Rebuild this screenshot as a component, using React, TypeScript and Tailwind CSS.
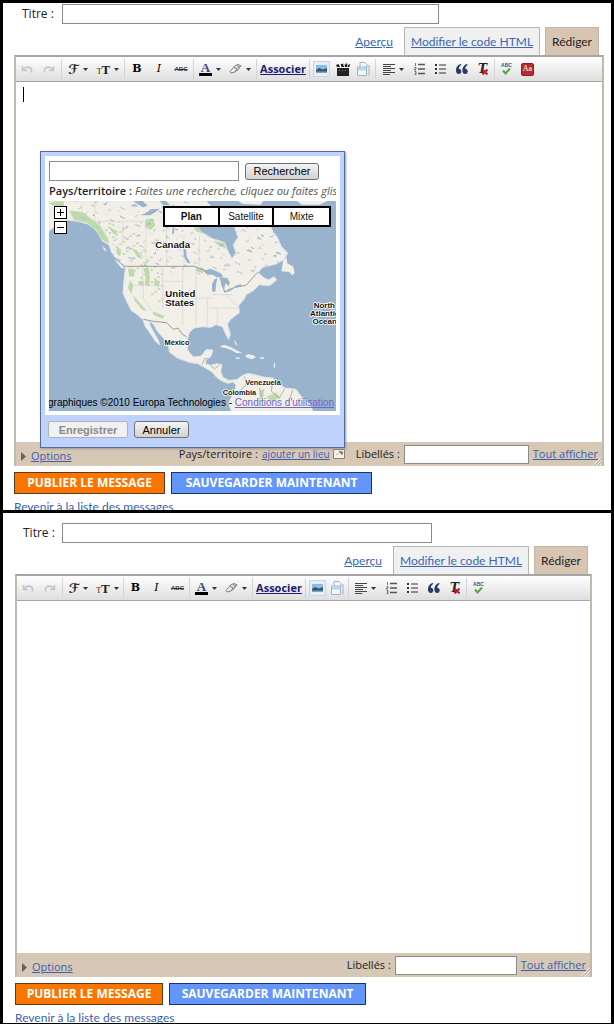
import type { ReactNode } from 'react';
import { clsx } from 'clsx';

const LAND =
  'M9 9 L9 98 L30 84 L65 66 L95 70 L125 78 L146 92 L160 112 L168 128 L190 142 L196 162 L208 178 L226 194 L240 205 L236 226 L233 256 L231 286 L244 314 L256 338 L274 350 L290 364 L298 386 L310 402 L318 414 L330 432 L342 441 L336 424 L324 404 L313 384 L308 368 L322 378 L334 400 L352 420 L368 443 L370 462 L394 480 L430 493 L455 497 L472 506 L497 521 L512 538 L526 548 L546 556 L560 552 L570 560 L568 580 L554 602 L548 616 L556 639 L800 639 L790 614 L766 596 L750 574 L716 570 L690 550 L680 540 L656 538 L626 530 L606 526 L590 532 L572 545 L548 547 L530 538 L524 520 L528 500 L512 497 L494 502 L478 498 L480 486 L494 476 L501 456 L480 455 L466 474 L442 477 L426 458 L422 432 L430 404 L444 390 L470 386 L494 388 L510 380 L530 386 L538 406 L548 424 L553 408 L544 378 L554 364 L580 344 L578 322 L594 304 L600 290 L622 278 L640 260 L654 262 L672 262 L692 246 L684 236 L668 246 L652 238 L636 224 L650 208 L690 198 L716 184 L725 165 L706 146 L694 118 L680 100 L668 74 L640 50 L600 40 L574 60 L566 88 L576 118 L562 140 L570 164 L558 182 L544 156 L536 134 L500 122 L468 104 L452 84 L456 50 L500 30 L480 9 Z';

const GREENS = [
  'M70 38 L110 42 L140 66 L160 80 L186 120 L190 138 L166 124 L150 94 L122 74 L84 66 Z',
  'M9 16 L28 10 L52 10 L54 24 L30 28 Z',
  'M300 62 L322 64 L328 82 L314 96 L296 86 Z',
  'M440 70 L462 90 L466 106 L450 100 Z',
  'M196 92 L214 98 L210 112 L198 104 Z',
  'M256 150 L274 158 L290 184 L276 178 Z',
  'M212 146 L226 156 L222 176 L212 166 Z',
  'M246 212 L262 214 L266 234 L250 236 Z',
  'M292 212 L306 206 L312 238 L308 266 L296 258 L300 236 Z',
  'M326 246 L342 250 L338 268 L324 262 Z',
  'M252 246 L262 262 L256 288 L246 270 Z',
  'M262 292 L284 318 L302 338 L290 336 L266 308 Z',
  'M320 340 L356 354 L350 362 L322 350 Z',
  'M448 208 L476 214 L470 226 L452 220 Z',
  'M500 128 L536 136 L540 152 L518 142 Z',
  'M276 250 L292 248 L294 262 L280 262 Z',
  'M640 578 L656 572 L650 602 L640 596 Z',
  'M660 596 L690 584 L704 600 L676 608 Z',
];

const LAKES = [
  'M282 52 L302 44 L314 34 L342 32 L326 44 L312 52 Z',
  'M262 10 L290 9 L304 24 L290 28 Z',
  'M340 9 L360 9 L372 22 L352 22 Z',
  'M412 150 L420 156 L422 176 L434 194 L424 194 L414 176 Z',
  'M380 88 L386 90 L382 112 L378 104 Z',
  'M472 220 L492 212 L508 218 L524 226 L532 236 L512 238 L500 230 L484 230 Z',
  'M506 244 L514 240 L510 262 L508 282 L498 280 L498 258 Z',
  'M524 238 L544 240 L552 254 L548 264 L538 256 L534 276 L526 262 Z',
  'M534 284 L548 272 L566 270 L552 280 Z',
  'M566 264 L584 258 L586 264 L570 270 Z',
];

const ISLANDS = [
  'M712 186 L722 180 L724 196 L742 206 L746 226 L738 232 L730 222 L706 220 Z',
  'M520 446 L534 440 L552 446 L570 456 L588 464 L572 466 L556 456 L538 450 Z',
  'M598 474 L606 468 L622 472 L630 478 L616 484 L600 478 Z',
  'M570 478 L582 479 L580 483 L570 482 Z',
  'M642 478 L654 478 L654 482 L644 483 Z',
  'M168 142 L178 152 L182 162 L174 156 Z',
  'M204 184 L222 196 L238 212 L226 210 Z',
  'M576 9 L652 9 L644 20 L590 18 Z',
  'M752 9 L844 9 L820 20 L768 20 Z',
  'M564 426 L570 432 L574 444 L568 438 Z',
  'M684 492 L688 500 L686 512 L683 504 Z',
];

// small lakes and rivers scattered over the northern land
const SPECKS = Array.from({ length: 520 }, (_, i) => ({
  x: 90 + ((i * 137) % 641),
  y: 12 + ((i * 89 + Math.floor(i / 7) * 13) % 217),
  dx: ((i * 7) % 13) - 4,
  dy: ((i * 5) % 11) - 6,
}));

const GREEN_SPECKS = Array.from({ length: 60 }, (_, i) => ({
  x: 160 + ((i * 53) % 191),
  y: 76 + ((i * 71) % 263),
}));

const MAP_LABELS = [
  { text: 'Canada', x: 380, y: 151, size: 29 },
  { text: 'United', x: 403, y: 296, size: 29 },
  { text: 'States', x: 401, y: 323, size: 29 },
  { text: 'México', x: 393, y: 442, size: 22 },
  { text: 'Venezuela', x: 651, y: 561, size: 22 },
  { text: 'Colombia', x: 580, y: 591, size: 22 },
  { text: 'North', x: 835, y: 330, size: 24 },
  { text: 'Atlantic', x: 836, y: 354, size: 24 },
  { text: 'Ocean', x: 836, y: 378, size: 24 },
];

const MapDrawing = () => (
  <svg viewBox="9 9 861 630" preserveAspectRatio="xMidYMid slice" className="block h-[210px] w-full bg-[#99b3cc]">
    <defs>
      <clipPath id="land">
        <path d={LAND} />
      </clipPath>
    </defs>
    <path d={LAND} fill="#f2efe9" stroke="#dfe6ea" strokeWidth="3" strokeLinejoin="round" />
    <g clipPath="url(#land)">
      {GREENS.map((d) => (
        <path key={d} d={d} fill="#b5d6a0" opacity="0.85" />
      ))}
      {GREEN_SPECKS.map((s, i) => (
        <ellipse key={i} cx={s.x} cy={s.y} rx="5" ry="3" fill="#b9d9a4" opacity="0.8" />
      ))}
      {SPECKS.map((s, i) => (
        <path key={i} d={`M${s.x} ${s.y} l${s.dx} ${s.dy}`} stroke={i % 3 ? '#b4c4d2' : '#93abc2'} strokeWidth="3" />
      ))}
      <g fill="none" stroke="#d6d2cc" strokeWidth="2">
        <path d="M146 9 V70 H300 M230 70 V140 M300 70 V204 M362 80 V204 M414 110 V204 M460 110 V204" />
        <path d="M290 206 V262 H350 M350 206 V330 M262 262 H292 V300 L318 340 M350 250 H410 M350 290 H420 M410 206 V380 M450 206 V300 H500 M450 300 V380 M484 300 V384 M500 290 H560 M490 330 H580 M514 330 V380 M540 290 L570 320" />
      </g>
      <path
        d="M236 205 H446 L474 216 L520 232 L536 282 L566 268 L600 262 L632 226 L640 222 M292 364 L322 370 L362 374 L382 394 L396 390 L410 410 L422 416"
        fill="none"
        stroke="#9c9a98"
        strokeWidth="3"
      />
      <path d="M468 500 L476 482 L490 482 M494 504 L506 512 L520 502 M572 590 L600 560 L596 536 M640 570 L650 604 M680 548 L676 580 L700 600 L716 572 M740 576 L732 600" fill="none" stroke="#b9b2a4" strokeWidth="3" />
    </g>
    {LAKES.map((d) => (
      <path key={d} d={d} fill="#99b3cc" />
    ))}
    {ISLANDS.map((d) => (
      <path key={d} d={d} fill="#f2efe9" />
    ))}
    {MAP_LABELS.map((l) => (
      <text
        key={l.text}
        x={l.x}
        y={l.y}
        fontSize={l.size}
        textAnchor="middle"
        fill="#111"
        stroke="#fff"
        strokeWidth="5"
        strokeLinejoin="round"
        paintOrder="stroke"
        className="font-bold"
      >
        {l.text}
      </text>
    ))}
  </svg>
);

const Arrow = () => (
  <svg viewBox="0 0 5 3" className="h-[3px] w-[5px] shrink-0">
    <path d="M0 0h5L2.5 3z" fill="#2b3350" />
  </svg>
);

const Separator = () => <span className="mx-px h-5 w-px shrink-0 bg-[#d4d4d4]" />;

const Tool = ({ label, className, children }: { label: string; className: string; children: ReactNode }) => (
  <button type="button" aria-label={label} className={clsx('flex h-5 shrink-0 items-center justify-center', className)}>
    {children}
  </button>
);

const Toolbar = ({ compact = false }: { compact?: boolean }) => {
  const menu = clsx('gap-1', compact ? 'w-[29px]' : 'w-[30px]');
  const style = compact ? 'w-[21px]' : 'w-[22px]';
  const insert = compact ? 'w-5' : 'w-[21px]';

  return (
    <div className="flex h-[25px] items-center overflow-hidden border-b border-[#a5a5a5] bg-linear-to-b from-white to-[#dedede]">
      <Tool label="Annuler la frappe" className="w-[22px]">
        <svg viewBox="0 0 12 10" className="h-[10px] w-3" fill="none" stroke="#c0c5d0" strokeWidth="1.6">
          <path d="M1.5 2v4.5H6M2 6C4 2.5 9 2 10.5 5.500c.4 1.300 0 2.200-.7 3" />
        </svg>
      </Tool>
      <Tool label="Rétablir" className="w-[22px]">
        <svg viewBox="0 0 12 10" className="h-[10px] w-3" fill="none" stroke="#c0c5d0" strokeWidth="1.6">
          <path d="M10.500 2v4.500H6M10 6C8 2.500 3 2 1.500 5.500c-.4 1.300 0 2.200.7 3" />
        </svg>
      </Tool>
      <Separator />
      <Tool label="Police" className={menu}>
        <span className="font-['DejaVu_Sans',sans-serif] text-[13px] leading-none font-bold text-[#222]">ℱ</span>
        <Arrow />
      </Tool>
      <Tool label="Taille" className={menu}>
        <span className="flex items-baseline font-['Liberation_Serif',serif] leading-none text-[#222]">
          <span className="text-[8px]">T</span>
          <span className="text-[13px] font-bold">T</span>
        </span>
        <Arrow />
      </Tool>
      <Separator />
      <Tool label="Gras" className={style}>
        <span className="font-['DejaVu_Serif',serif] text-[11px] font-bold text-black">B</span>
      </Tool>
      <Tool label="Italique" className={style}>
        <span className="font-['DejaVu_Serif',serif] text-[11px] text-black italic">I</span>
      </Tool>
      <Tool label="Barré" className={style}>
        <span className="font-['Liberation_Sans',sans-serif] text-[6px] font-bold text-[#333] line-through">ABC</span>
      </Tool>
      <Separator />
      <Tool label="Couleur du texte" className="w-[30px] gap-1">
        <span className="flex h-[14px] w-[13px] justify-center border-b-[3px] border-black font-['Liberation_Serif',serif] text-[13px] leading-[11px] font-bold text-[#3b4a78]">
          A
        </span>
        <Arrow />
      </Tool>
      <Tool label="Surlignage" className="w-[30px] gap-1">
        <svg viewBox="0 0 13 12" className="h-3 w-[13px]" fill="#eef0f2" stroke="#7a7d84" strokeWidth="1">
          <path d="M5 3.500L8.500 1.500l3 1L9 7l-3 1.500z" />
          <path d="M1 8.500l3.500-4 3.500 1L6 9l-4 1z" />
          <path d="M8.500 1.500L9.500 5M11.500 2.500L12 4" fill="none" />
        </svg>
        <Arrow />
      </Tool>
      <Separator />
      <button type="button" className="w-[50px] shrink-0 text-[11px] font-bold text-[#1c1c72] underline">
        Associer
      </button>
      <Separator />
      <Tool label="Image" className={insert}>
        <svg viewBox="0 0 17 16" className="h-4 w-[17px]">
          <path d="M.5.5h16v15H.5z" fill="#e6eff8" stroke="#c3d6e8" />
          <path d="M3 4h11v8H3z" fill="#8bbde4" />
          <path d="M3 9l3-2 4 1.500L14 7v5H3z" fill="#33566f" />
          <path d="M3 10.500h11V12H3z" fill="#7fa6bd" />
        </svg>
      </Tool>
      {!compact && (
        <Tool label="Vidéo" className={insert}>
          <svg viewBox="0 0 14 13" className="h-[13px] w-[14px]" fill="#222">
            <path d="M1 5h12v8H1zM0 2l2.500-1L4 4H1zM4.500 1.500L7 .5 8 4H5.500zM8.500 2L11 0l.5 4H9zM12 2l2-1-.5 3H12z" />
            <path d="M3 7h1v1H3zM6 7h1v1H6zM9 7h1v1H9z" fill="#888" />
          </svg>
        </Tool>
      )}
      <Tool label="Saut de page" className={insert}>
        <svg viewBox="0 0 13 14" className="h-[14px] w-[13px]" fill="#f2f7fb" stroke="#9ab4c9">
          <path d="M3 5.500V.5h5l2 2v3M.5 5h9v8.500h-9zM12 3v10.500" />
          <path d="M1 5.500h8v3H1z" fill="#b9d5ea" stroke="none" />
        </svg>
      </Tool>
      <Separator />
      <Tool label="Alignement" className={clsx('gap-1', compact ? 'w-[31px]' : 'w-8')}>
        <svg viewBox="0 0 12 11" className="h-[11px] w-3" stroke="#444" strokeWidth="1">
          <path d="M0 .5h12M0 2.500h8M0 4.500h12M0 6.500h8M0 8.500h12M0 10.500h7" />
        </svg>
        <Arrow />
      </Tool>
      <Tool label="Liste numérotée" className="w-[21px]">
        <svg viewBox="0 0 11 12" className="h-3 w-[11px]" stroke="#555" fill="none">
          <path d="M4 1.500h7M4 6h7M4 10.500h7" strokeWidth="1.300" />
          <path d="M1.500 0v3M.5 4.500h1.500v1.500H.5v1H2M.5 8.500H2v3H.5M1 10h1" strokeWidth=".8" />
        </svg>
      </Tool>
      <Tool label="Liste à puces" className="w-[21px]">
        <svg viewBox="0 0 11 12" className="h-3 w-[11px]" fill="#333">
          <path d="M0 1h2v2H0zM0 5h2v2H0zM0 9h2v2H0zM4 1.500h7v1H4zM4 5.500h7v1H4zM4 9.500h7v1H4z" />
        </svg>
      </Tool>
      <Tool label="Citation" className="w-[21px]">
        <svg viewBox="0 0 12 10" className="h-[10px] w-3" fill="#2c3a63">
          <path d="M5 0C2 .5 0 3 0 6.500 0 8.500 1 10 2.700 10S5.300 8.800 5.300 7.200 4.200 4.800 2.800 4.700C3 3 3.800 1.800 5.200 1zM11.300 0C8.500.5 6.400 3 6.400 6.500c0 2 1 3.500 2.700 3.500s2.600-1.200 2.600-2.800-1.100-2.400-2.500-2.500c.2-1.700 1-2.900 2.400-3.700z" />
        </svg>
      </Tool>
      <Tool label="Supprimer la mise en forme" className="w-[21px]">
        <span className="relative font-['DejaVu_Serif',serif] text-[12px] leading-none font-bold text-[#222] italic">
          T
          <svg viewBox="0 0 6 6" className="absolute -right-px bottom-0 size-[6px]" stroke="#c2182b" strokeWidth="2">
            <path d="M.5.5l5 5M5.500.5l-5 5" />
          </svg>
        </span>
      </Tool>
      <Separator />
      <Tool label="Orthographe" className="w-[21px] flex-col">
        <span className="font-['Liberation_Sans',sans-serif] text-[5px] leading-[5px] font-bold text-[#3d4f7d]">ABC</span>
        <svg viewBox="0 0 9 7" className="h-[7px] w-[9px]" fill="none" stroke="#55a53f" strokeWidth="2">
          <path d="M1 2.500L3.500 5.500 8 .5" />
        </svg>
      </Tool>
      {!compact && (
        <Tool label="Dictionnaire" className="w-[21px]">
          <span className="flex h-[13px] w-[13px] items-center justify-center rounded-[2px] border border-[#8a2323] bg-[#b52e2e] font-['Liberation_Serif',serif] text-[8px] leading-none text-white">
            Aa
          </span>
        </Tool>
      )}
    </div>
  );
};

const Tabs = ({ className }: { className: string }) => (
  <nav className={clsx("flex items-stretch justify-end font-['Lato',sans-serif] text-[12px] leading-4", className)}>
    <a href="#apercu" className="px-[11px] pt-[7px] text-[#3a66b5] underline">
      Aperçu
    </a>
    <a href="#html" className="border border-b-0 border-[#b5b5b5] bg-[#f0f0f0] px-[6px] pt-[6px] text-[#3a66b5] underline">
      Modifier le code HTML
    </a>
    <a href="#rediger" className="ml-[5px] border border-b-0 border-[#c0b5a6] bg-[#d7c5b1] px-[6px] pt-[6px] text-[#222]">
      Rédiger
    </a>
  </nav>
);

const nativeButton =
  "rounded-[3px] border border-[#707070] bg-linear-to-b from-[#f4f4f4] to-[#d2d2d2] font-['Liberation_Sans',sans-serif] text-black";

const LocationPopup = () => (
  <div className="absolute top-[69px] left-6 z-10 w-[305px] border border-[#566a94] bg-[#bfd2fd] p-1 shadow-[1px_1px_2px_#999]">
    <div className="bg-white px-1 pt-[5px] pb-1">
      <div className="flex items-center gap-[6px]">
        <input aria-label="Rechercher un lieu" className="h-5 w-[190px] border border-[#8b8b8b] bg-white px-1 text-[11px]" />
        <button type="button" className={clsx(nativeButton, 'h-[17px] w-[74px] text-[11px] leading-[14px]')}>
          Rechercher
        </button>
      </div>
      <p className="overflow-hidden text-[11px] leading-5 whitespace-nowrap text-[#222]">
        <span className="font-semibold">Pays/territoire :</span>{' '}
        <em className="text-[#555]">Faites une recherche, cliquez ou faites glisser</em>
      </p>
      <div className="relative overflow-hidden font-['Liberation_Sans',sans-serif]">
        <MapDrawing />
        <div className="absolute top-[5px] left-[5px] flex flex-col gap-[2px]">
          <button type="button" aria-label="Zoom avant" className="flex size-[13px] items-center justify-center border border-black bg-white">
            <svg viewBox="0 0 7 7" className="size-[7px]" stroke="#000">
              <path d="M0 3.500h7M3.500 0v7" />
            </svg>
          </button>
          <button type="button" aria-label="Zoom arrière" className="flex size-[13px] items-center justify-center border border-black bg-white">
            <svg viewBox="0 0 7 7" className="size-[7px]" stroke="#000">
              <path d="M0 3.500h7" />
            </svg>
          </button>
        </div>
        <div className="absolute top-[5px] right-[5px] grid h-[21px] w-[168px] grid-cols-3 divide-x-2 divide-black border-2 border-black bg-white text-[10px] text-[#111]">
          <button type="button" className="font-bold">Plan</button>
          <button type="button">Satellite</button>
          <button type="button">Mixte</button>
        </div>
        <p className="absolute right-[2px] bottom-[2px] text-[10px] leading-3 whitespace-nowrap text-black">
          graphiques ©2010 Europa Technologies - <a href="#conditions" className="text-[#6f66c4] underline">Conditions d'utilisation</a>
        </p>
      </div>
    </div>
    <div className="flex gap-[6px] px-[3px] pt-[6px] pb-[5px]">
      <button type="button" disabled className="h-[17px] w-[80px] rounded-[3px] border border-[#aeb3bd] bg-[#f1f1f1] font-['Liberation_Sans',sans-serif] text-[11px] leading-[14px] font-bold text-[#8a8a8a]">
        Enregistrer
      </button>
      <button type="button" className={clsx(nativeButton, 'h-[17px] w-[55px] text-[11px] leading-[14px]')}>
        Annuler
      </button>
    </div>
  </div>
);

const Grip = () => (
  <svg viewBox="0 0 10 9" className="absolute right-0 bottom-0 h-[9px] w-[10px]" stroke="#f7f2ea">
    <path d="M1 8.500L9.500 0M4.500 8.500L9.500 3.500M7.500 8.500L9.500 6.500" />
    <path d="M2 9L10 1M5.500 9L10 4.500" stroke="#a69a8a" strokeWidth=".6" />
  </svg>
);

const Footer = ({ id, withLocation = false }: { id: string; withLocation?: boolean }) => (
  <div className="relative flex h-6 items-center bg-[#d7c7b5] pr-1 pl-[5px] text-[11px] text-[#222]">
    <button type="button" className="flex items-center gap-[5px] pt-1 text-[#3a5fb0]">
      <svg viewBox="0 0 5 9" className="h-[9px] w-[5px]">
        <path d="M0 0l5 4.500L0 9z" fill="#6a6258" />
      </svg>
      <span className="text-[11px] underline">Options</span>
    </button>
    {withLocation && (
      <div className="ml-auto flex items-center">
        <span>Pays/territoire :</span>
        <a href="#lieu" className="ml-1 text-[10px] text-[#3a5fb0] underline">
          ajouter un lieu
        </a>
        <svg viewBox="0 0 12 10" className="ml-[3px] h-[10px] w-3">
          <path d="M.5.5h11v9H.5z" fill="#f3f1ec" stroke="#85817a" />
          <path d="M6 2l4 1-1 3zM3 6l4-3" fill="#a8503c" stroke="#8f8a82" strokeWidth=".6" />
        </svg>
      </div>
    )}
    <label htmlFor={id} className={withLocation ? 'ml-[11px]' : 'ml-auto'}>
      Libellés :
    </label>
    <input id={id} className={clsx('ml-1 h-[19px] border border-[#8b8b8b] bg-white px-1', withLocation ? 'w-[125px]' : 'w-[122px]')} />
    <a href="#libelles" className="ml-1 text-[#3a5fb0] underline">
      Tout afficher
    </a>
    <Grip />
  </div>
);

const Actions = ({ compact = false }: { compact?: boolean }) => (
  <>
    <div className="mt-[6px] flex gap-[6px] text-[12px] font-bold text-white">
      <button type="button" className={clsx('h-[22px] border border-[#5c3a1a] bg-[#f97500]', compact ? 'w-[148px]' : 'w-[151px]')}>
        PUBLIER LE MESSAGE
      </button>
      <button type="button" className={clsx('h-[22px] border border-[#1d3566] bg-[#6396f8]', compact ? 'w-[197px]' : 'w-[201px]')}>
        SAUVEGARDER MAINTENANT
      </button>
    </div>
    <div className={clsx('overflow-hidden pt-[5px]', compact ? 'h-[18px]' : 'h-4')}>
      <a href="#messages" className="block font-['Lato',sans-serif] text-[12px] leading-4 text-[#3a5fa8] underline">
        Revenir à la liste des messages
      </a>
    </div>
  </>
);

const App = () => {
  return (
    <main className="flex flex-col gap-[3px] bg-black p-[3px] font-['Open_Sans','Noto_Sans',sans-serif]">
      <section className="bg-white pt-px pr-[7px] pl-[11px]">
        <div className="flex items-center gap-[6px] pl-2">
          <label htmlFor="titre-1" className="w-[34px] text-[12px] leading-5 whitespace-nowrap text-[#222]">
            Titre :
          </label>
          <input id="titre-1" className="mr-[165px] h-5 min-w-0 flex-1 border border-[#8b8b8b] bg-white px-1 text-[12px]" />
        </div>
        <Tabs className="mt-[3px] h-7 pr-[5px]" />
        <div className="border-2 border-b-0 border-[#c1b9ad] border-t-[#a5a5a5] bg-white">
          <Toolbar />
          <div className="relative">
            <textarea aria-label="Message" className="block h-[360px] w-full resize-none" />
            <span className="absolute top-[5px] left-[7px] h-[15px] w-px bg-black" />
            <LocationPopup />
          </div>
          <Footer id="libelles-1" withLocation />
        </div>
        <Actions />
      </section>

      <section className="bg-white pt-[10px] pr-[19px] pl-3">
        <div className="flex items-center gap-[6px] pl-2">
          <label htmlFor="titre-2" className="w-[33px] text-[12px] leading-5 whitespace-nowrap text-[#222]">
            Titre :
          </label>
          <input id="titre-2" className="mr-[160px] h-5 min-w-0 flex-1 border border-[#8b8b8b] bg-white px-1 text-[12px]" />
        </div>
        <Tabs className="mt-[3px] h-7 pr-[4px]" />
        <div className="border-2 border-b-0 border-[#c1b9ad] border-t-[#a5a5a5] bg-white">
          <Toolbar compact />
          <textarea aria-label="Message" className="block h-[352px] w-full resize-none" />
          <Footer id="libelles-2" />
        </div>
        <Actions compact />
      </section>
    </main>
  );
};

export default App;
